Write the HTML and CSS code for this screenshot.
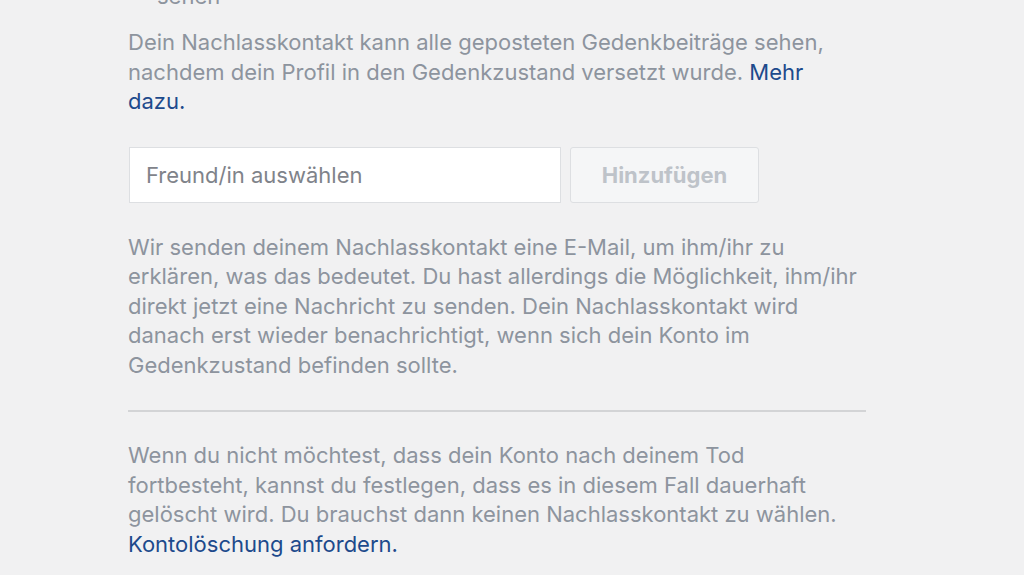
FILE: index.html
```html
<!DOCTYPE html>
<html lang="de">
<head>
  <meta charset="UTF-8">
  <title>Nachlasskontakt</title>
  <link rel="stylesheet" href="styles.css">
</head>
<body>

<div class="settings">
    <ul class="list">
        <li>sehen</li>
    </ul>

    <p class="info">Dein Nachlasskontakt kann alle geposteten Gedenkbeiträge sehen, nachdem dein Profil in den Gedenkzustand versetzt wurde. <a href="#">Mehr dazu.</a></p>

    <div class="pick">
        <input class="friend" type="text" placeholder="Freund/in auswählen">
        <button class="add" disabled>Hinzufügen</button>
    </div>

    <p class="info">Wir senden deinem Nachlasskontakt eine E-Mail, um ihm/ihr zu erklären, was das bedeutet. Du hast allerdings die Möglichkeit, ihm/ihr direkt jetzt eine Nachricht zu senden. Dein Nachlasskontakt wird danach erst wieder benachrichtigt, wenn sich dein Konto im Gedenkzustand befinden sollte.</p>

    <hr class="line">

    <p class="info">Wenn du nicht möchtest, dass dein Konto nach deinem Tod fortbesteht, kannst du festlegen, dass es in diesem Fall dauerhaft gelöscht wird. Du brauchst dann keinen Nachlasskontakt zu wählen. <a href="#">Kontolöschung anfordern.</a></p>
</div>

</body>
</html>
```

FILE: styles.css
```css
body {
    margin: 0;
    background: #f1f1f2;
    font-family: Inter, "Liberation Sans", sans-serif;
    overflow: hidden;
}
.settings {
    width: 738px;
    margin-left: 128px;
    margin-top: -18px;
}
.list {
    margin: 0;
    padding-left: 29px;
    list-style: none;
    font-size: 22px;
    line-height: 29px;
    color: #8d949e;
}
.info {
    max-width: 734px;
    margin: 17px 0 0;
    font-size: 22px;
    line-height: 29.5px;
    color: #8d949e;
}
.info a {
    color: #1d4a8c;
    text-decoration: none;
}
.pick {
    display: flex;
    gap: 9px;
    margin-top: 30px;
    margin-left: 1px;
}
.friend {
    box-sizing: border-box;
    width: 432px;
    height: 56px;
    padding: 0 16px;
    border: 1px solid #dddfe2;
    background: #fff;
    font-family: inherit;
    font-size: 22px;
    color: #1d2129;
    outline: none;
}
.friend::placeholder {
    color: #7f838a;
}
.add {
    box-sizing: border-box;
    width: 189px;
    height: 56px;
    border: 1px solid #dddfe2;
    border-radius: 3px;
    background: #f5f6f7;
    font-family: inherit;
    font-size: 22px;
    font-weight: bold;
    color: #bec3c9;
}
.pick + .info {
    margin-top: 30px;
}
.line {
    margin: 30px 0 0;
    border: 0;
    border-top: 2px solid #d3d4d6;
}
.line + .info {
    margin-top: 29px;
}
```
